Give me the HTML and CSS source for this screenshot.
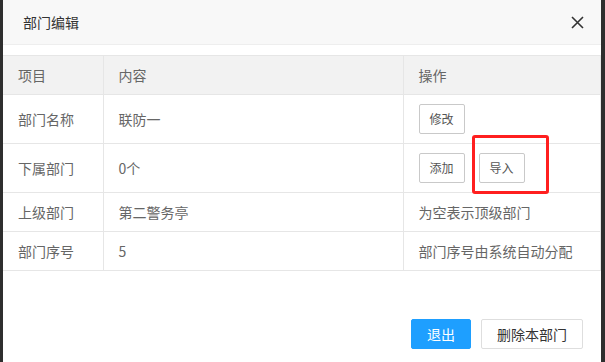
FILE: index.html
```html
<!DOCTYPE html>
<html lang="zh-CN">
<head>
    <meta charset="UTF-8">
    <title>部门编辑</title>
    <link rel="stylesheet" href="styles.css">
</head>
<body>
    <div class="layer">
        <div class="layer-title">
            <span>部门编辑</span>
            <svg class="layer-close" width="13" height="13" viewBox="0 0 13 13">
                <path d="M1 1 L12 12 M12 1 L1 12" stroke="#333" stroke-width="1.6" fill="none"/>
            </svg>
        </div>
        <div class="layer-content">
            <table class="info-table">
                <colgroup>
                    <col class="col-item">
                    <col class="col-content">
                    <col>
                </colgroup>
                <thead>
                    <tr><th>项目</th><th>内容</th><th>操作</th></tr>
                </thead>
                <tbody>
                    <tr>
                        <td>部门名称</td>
                        <td>联防一</td>
                        <td class="op-cell"><button class="btn-sm">修改</button></td>
                    </tr>
                    <tr>
                        <td>下属部门</td>
                        <td>0个</td>
                        <td class="op-cell"><button class="btn-sm">添加</button><span class="mark-wrap"><button class="btn-sm">导入</button><span class="mark"></span></span></td>
                    </tr>
                    <tr>
                        <td>上级部门</td>
                        <td>第二警务亭</td>
                        <td>为空表示顶级部门</td>
                    </tr>
                    <tr>
                        <td>部门序号</td>
                        <td>5</td>
                        <td>部门序号由系统自动分配</td>
                    </tr>
                </tbody>
            </table>
        </div>
        <div class="layer-btns">
            <a class="btn btn-primary">退出</a>
            <a class="btn">删除本部门</a>
        </div>
    </div>
</body>
</html>
```

FILE: styles.css
```css
body {
    margin: 0;
    padding: 0;
    background: #2e2e2e;
    font-family: "Noto Sans CJK SC", "Liberation Sans", sans-serif;
    font-size: 14px;
}
.layer {
    margin-left: 3px;
    width: 598px;
    height: 362px;
    background: #fff;
    display: flex;
    flex-direction: column;
}
.layer-title {
    height: 45px;
    padding: 0 17px 0 20px;
    background: #f8f8f8;
    border-bottom: 1px solid #eee;
    color: #333;
    display: flex;
    align-items: center;
    justify-content: space-between;
    box-sizing: border-box;
}
.layer-close {
    display: block;
}
.layer-content {
    padding-top: 10px;
}
.info-table {
    width: 100%;
    border-collapse: collapse;
    color: #666;
    table-layout: fixed;
}
.col-item {
    width: 100px;
}
.col-content {
    width: 300px;
}
.info-table th,
.info-table td {
    border: 1px solid #e6e6e6;
    padding: 9px 15px;
    height: 20px;
    line-height: 20px;
    text-align: left;
    font-weight: normal;
    white-space: nowrap;
}
.info-table th {
    background: #f2f2f2;
}
.info-table tr > :first-child {
    border-left: none;
}
.info-table .op-cell {
    height: 30px;
    line-height: 0;
}
.btn-sm {
    display: inline-block;
    box-sizing: border-box;
    height: 30px;
    line-height: 28px;
    padding: 0 10px;
    font-family: inherit;
    font-size: 12px;
    color: #555;
    background: #fff;
    border: 1px solid #c9c9c9;
    border-radius: 2px;
    vertical-align: top;
}
.mark-wrap {
    position: relative;
    display: inline-block;
    margin-left: 14px;
    vertical-align: top;
}
.mark {
    position: absolute;
    left: -7px;
    top: -18px;
    width: 71px;
    height: 53px;
    border: 3px solid #ff1f1f;
    border-radius: 3px;
}
.layer-btns {
    margin-top: auto;
    padding: 0 18px 13px 0;
    display: flex;
    justify-content: flex-end;
    gap: 10px;
}
.btn {
    height: 28px;
    line-height: 28px;
    padding: 0 15px;
    border: 1px solid #dedede;
    border-radius: 2px;
    background: #fff;
    color: #333;
    font-size: 14px;
}
.btn-primary {
    background: #1e9fff;
    border-color: #1e9fff;
    color: #fff;
}
```
